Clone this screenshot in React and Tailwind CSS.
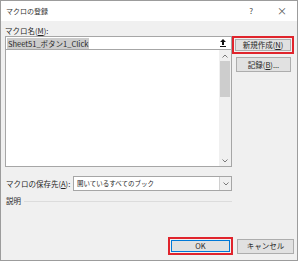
const FONT = "font-['Noto_Sans_CJK_JP','Noto_Sans',sans-serif]";

function UploadIcon() {
  return (
    <svg width="6" height="8" viewBox="0 0 6 8" className="block">
      <path d="M3 0 L6 3 L4 3 L4 6 L2 6 L2 3 L0 3 Z" fill="#111" />
      <rect x="0" y="7" width="6" height="1" fill="#111" />
    </svg>
  );
}

function Chevron({ up }) {
  return (
    <svg width="6" height="4" viewBox="0 0 6 4" className="block">
      <path d={up ? 'M0.5 3.5 L3 1 L5.5 3.5' : 'M0.5 0.5 L3 3 L5.5 0.5'} stroke="#7a7a7a" strokeWidth="1" fill="none" />
    </svg>
  );
}

export default function App() {
  return (
    <div className={`w-[300px] h-[262px] bg-white text-[7.5px] text-[#262626] ${FONT}`}>
      <div className="w-[298px] h-[261px] border border-[#9c9c9c] flex flex-col bg-[#f0f0f0]">
        {/* title bar */}
        <div className="h-[20px] bg-white flex items-center pl-[5px] text-[7px] text-[#333]">
          <span>マクロの登録</span>
          <span className="ml-auto text-[8px] text-[#444]">?</span>
          <span className="ml-[24px] mr-[10px] text-[10px] text-[#555] leading-none">×</span>
        </div>

        <div className="flex-1 flex flex-col pl-[4px] pr-[3px]">
          <div className="mt-[4px] h-[11px] leading-[11px]">
            マクロ名(<span className="underline">M</span>):
          </div>

          <div className="flex">
            {/* left column */}
            <div className="w-[227px] flex flex-col">
              <div className="h-[14px] bg-white border border-[#a6a6a6] flex items-center pl-[1px] pr-[5px]">
                <span className="bg-[#cccccc] leading-[11px] px-[1px]">Sheet51_ボタン1_Click</span>
                <span className="ml-auto"><UploadIcon /></span>
              </div>
              <div className="h-[117px] bg-white border border-t-0 border-[#a6a6a6] flex">
                <div className="flex-1" />
                <div className="w-[12px] bg-[#f0f0f0] flex flex-col">
                  <div className="h-[11px] flex items-center justify-center"><Chevron up /></div>
                  <div className="mx-[1px] h-[36px] bg-[#cdcdcd]" />
                  <div className="flex-1" />
                  <div className="h-[11px] flex items-center justify-center"><Chevron /></div>
                </div>
              </div>
            </div>

            {/* right column */}
            <div className="flex flex-col">
              <div className="w-[62px] h-[18px] border-2 border-[#e0242c] p-[1px]">
                <div className="h-full bg-[#e1e1e1] border border-[#adadad] flex items-center justify-center">
                  新規作成(<span className="underline">N</span>)
                </div>
              </div>
              <div className="ml-[4px] mt-[3px] w-[55px] h-[15px] bg-[#e1e1e1] border border-[#adadad] flex items-center justify-center">
                記録(<span className="underline">B</span>)...
              </div>
            </div>
          </div>

          <div className="flex items-center mt-[9px] w-[227px]">
            <div className="w-[68px] pl-[1px]">
              マクロの保存先(<span className="underline">A</span>):
            </div>
            <div className="flex-1 h-[15px] bg-white border border-[#a6a6a6] flex items-center">
              <span className="pl-[3px] text-[6.5px]">開いているすべてのブック</span>
              <div className="ml-auto w-[12px] h-full border-l border-[#d0d0d0] bg-[#f0f0f0] flex items-center justify-center">
                <Chevron />
              </div>
            </div>
          </div>

          <div className="flex items-center mt-[4px] h-[12px] w-[227px]">
            <span className="pl-[1px]">説明</span>
            <div className="flex-1 ml-[3px] border-t border-[#dcdcdc]" />
          </div>

          <div className="mt-auto mb-[5px] flex justify-end items-center">
            <div className="w-[65px] h-[18px] border-2 border-[#e0242c] p-[1px]">
              <div className="h-full bg-[#e1e1e1] border border-[#0078d7] flex items-center justify-center font-normal">
                OK
              </div>
            </div>
            <div className="ml-[4px] w-[57px] h-[15px] bg-[#e1e1e1] border border-[#adadad] flex items-center justify-center">
              キャンセル
            </div>
          </div>
        </div>
      </div>
    </div>
  );
}
